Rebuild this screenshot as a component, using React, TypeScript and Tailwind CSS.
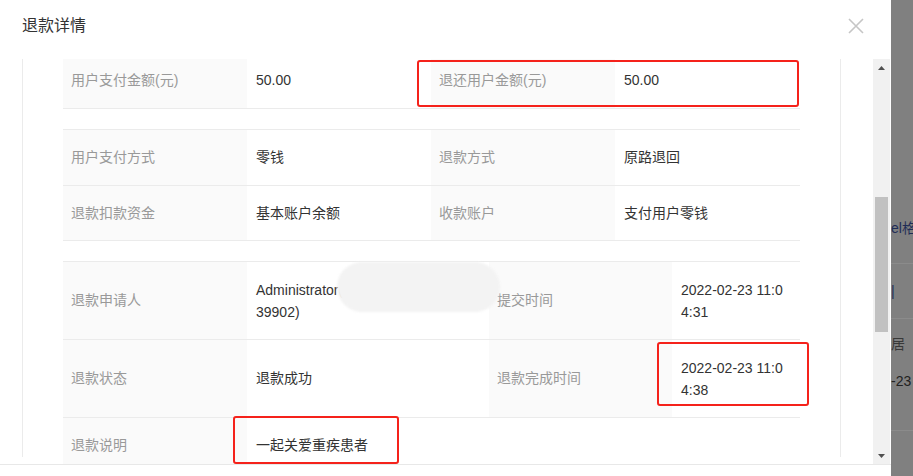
import React from 'react';

const font = { fontFamily: '"Liberation Sans", "Noto Sans CJK SC", sans-serif' };

const Label: React.FC<{ children: React.ReactNode }> = ({ children }) => (
  <div className="flex items-center bg-[#fafafa] px-[8px] text-[#999999]">{children}</div>
);

const Value: React.FC<{ children: React.ReactNode; className?: string }> = ({ children, className = '' }) => (
  <div className={`flex items-center px-[9px] text-[#333333] ${className}`}>{children}</div>
);

const TwoLines: React.FC<{ a: string; b: string }> = ({ a, b }) => (
  <div className="leading-[22px]">
    <div className="whitespace-nowrap">{a}</div>
    <div className="whitespace-nowrap">{b}</div>
  </div>
);

export default function App() {
  return (
    <div className="relative flex h-[476px] w-[913px] overflow-hidden text-[14px]" style={font}>
      {/* 弹窗 */}
      <div className="flex w-[891px] flex-col bg-white">
        {/* 头部 */}
        <div className="flex h-[59px] shrink-0 items-center justify-between pb-[8px] pl-[22px] pr-[27px]">
          <span className="text-[16px] text-[#333333]">退款详情</span>
          <svg width="16" height="16" viewBox="0 0 16 16">
            <path d="M1 1 L15 15 M15 1 L1 15" stroke="#c6c6c6" strokeWidth="1.6" fill="none" />
          </svg>
        </div>

        {/* 内容 + 滚动条 */}
        <div className="flex h-[405px] shrink-0">
          <div className="w-[873px] overflow-hidden">
            <div className="ml-[22px] h-full w-[819px] border-x border-[#ebebeb]">
              <div className="-mt-[7px] px-[40px]">
                {/* 金额 */}
                <div className="mb-[20px] border-t border-[#ebebeb]">
                  <div className="grid h-[56px] grid-cols-[184px_184px_184px_185px] border-b border-[#ebebeb]">
                    <Label>用户支付金额(元)</Label>
                    <Value>50.00</Value>
                    <Label>退还用户金额(元)</Label>
                    <Value>50.00</Value>
                  </div>
                </div>

                {/* 方式 */}
                <div className="mb-[20px] border-t border-[#ebebeb]">
                  <div className="grid h-[56px] grid-cols-[184px_184px_184px_185px] border-b border-[#ebebeb]">
                    <Label>用户支付方式</Label>
                    <Value>零钱</Value>
                    <Label>退款方式</Label>
                    <Value>原路退回</Value>
                  </div>
                  <div className="grid h-[55px] grid-cols-[184px_184px_184px_185px] border-b border-[#ebebeb]">
                    <Label>退款扣款资金</Label>
                    <Value>基本账户余额</Value>
                    <Label>收款账户</Label>
                    <Value>支付用户零钱</Value>
                  </div>
                </div>

                {/* 申请信息 */}
                <div className="border-t border-[#ebebeb]">
                  <div className="grid h-[78px] grid-cols-[184px_242px_183px_128px] border-b border-[#ebebeb]">
                    <Label>退款申请人</Label>
                    <Value>
                      <TwoLines a="Administrator(" b="39902)" />
                    </Value>
                    <Label>提交时间</Label>
                    <Value>
                      <TwoLines a="2022-02-23 11:0" b="4:31" />
                    </Value>
                  </div>
                  <div className="grid h-[78px] grid-cols-[184px_242px_183px_128px] border-b border-[#ebebeb]">
                    <Label>退款状态</Label>
                    <Value>退款成功</Value>
                    <Label>退款完成时间</Label>
                    <Value>
                      <TwoLines a="2022-02-23 11:0" b="4:38" />
                    </Value>
                  </div>
                  <div className="grid h-[56px] grid-cols-[184px_553px] border-b border-[#ebebeb]">
                    <Label>退款说明</Label>
                    <Value>一起关爱重疾患者</Value>
                  </div>
                </div>
              </div>
            </div>
          </div>

          {/* 滚动条 */}
          <div className="flex w-[17px] flex-col bg-[#f1f1f1]">
            <div className="flex h-[17px] items-center justify-center">
              <svg width="7" height="4" viewBox="0 0 7 4">
                <path d="M3.5 0 L7 4 L0 4 Z" fill="#505050" />
              </svg>
            </div>
            <div className="h-[121px]" />
            <div className="mx-[2px] h-[135px] bg-[#c1c1c1]" />
            <div className="flex-1" />
            <div className="flex h-[17px] items-center justify-center">
              <svg width="7" height="4" viewBox="0 0 7 4">
                <path d="M0 0 L7 0 L3.5 4 Z" fill="#505050" />
              </svg>
            </div>
          </div>
        </div>

        <div className="flex-1 border-t border-[#e8e8e8]" />
      </div>

      {/* 遮罩下的页面 */}
      <div className="flex flex-1 flex-col overflow-hidden bg-[#808080] text-[14px]">
        <div className="h-[218px]" />
        <div className="h-[20px] whitespace-nowrap leading-[20px] text-[#1f2c56]">el格</div>
        <div className="h-[26px] border-b border-[#8b8b8b]" />
        <div className="flex h-[54px] items-center whitespace-nowrap text-[#1f2c56]">|</div>
        <div className="h-[1px] bg-[#8b8b8b]" />
        <div className="flex h-[50px] items-center whitespace-nowrap text-[#383838]">居</div>
        <div className="h-[24px] whitespace-nowrap leading-[24px] text-[#222222]">-23</div>
        <div className="h-[38px] border-b border-[#8b8b8b]" />
      </div>

      {/* 打码 */}
      <div className="absolute left-[337px] top-[262px] h-[50px] w-[163px] rounded-full bg-[#f3f3f3] blur-[1px]" />

      {/* 红框标注 */}
      <div className="absolute left-[417px] top-[60px] h-[47px] w-[382px] rounded-[3px] border-2 border-[#f5221b]" />
      <div className="absolute left-[657px] top-[342px] h-[64px] w-[152px] rounded-[3px] border-2 border-[#f5221b]" />
      <div className="absolute left-[233px] top-[416px] h-[48px] w-[166px] rounded-[3px] border-2 border-[#f5221b]" />
    </div>
  );
}
